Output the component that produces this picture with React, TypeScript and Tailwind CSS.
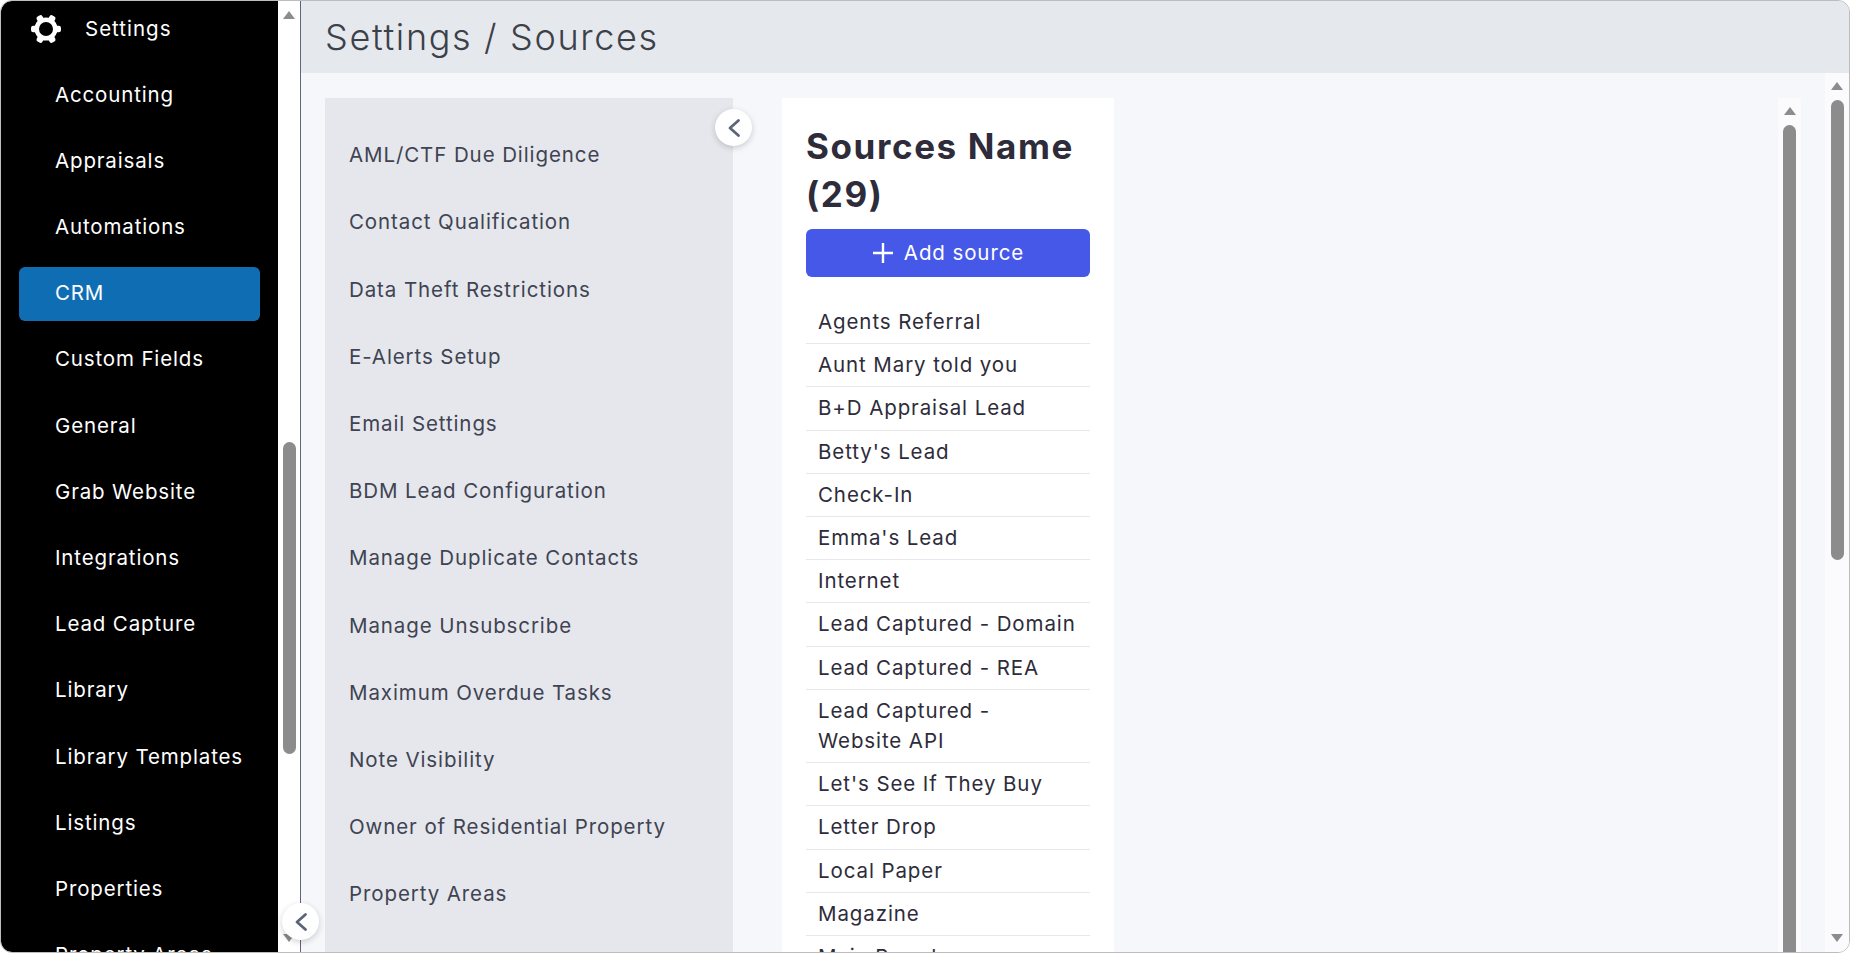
import React from "react";

const sidebarItems = [
  "Accounting",
  "Appraisals",
  "Automations",
  "CRM",
  "Custom Fields",
  "General",
  "Grab Website",
  "Integrations",
  "Lead Capture",
  "Library",
  "Library Templates",
  "Listings",
  "Properties",
  "Property Areas",
];

const panelItems = [
  "AML/CTF Due Diligence",
  "Contact Qualification",
  "Data Theft Restrictions",
  "E-Alerts Setup",
  "Email Settings",
  "BDM Lead Configuration",
  "Manage Duplicate Contacts",
  "Manage Unsubscribe",
  "Maximum Overdue Tasks",
  "Note Visibility",
  "Owner of Residential Property",
  "Property Areas",
];

const sources = [
  "Agents Referral",
  "Aunt Mary told you",
  "B+D Appraisal Lead",
  "Betty's Lead",
  "Check-In",
  "Emma's Lead",
  "Internet",
  "Lead Captured - Domain",
  "Lead Captured - REA",
  "Lead Captured - Website API",
  "Let's See If They Buy",
  "Letter Drop",
  "Local Paper",
  "Magazine",
  "Main Board",
];

const Gear = () => (
  <svg width="32" height="32" viewBox="0 0 32 32" className="shrink-0">
    {[30, 90, 150, 210, 270, 330].map((deg) => (
      <rect key={deg} x="12.75" y="1" width="6.5" height="7" rx="2.2" fill="#fff" transform={`rotate(${deg} 16 16)`} />
    ))}
    <circle cx="16" cy="16" r="9.25" fill="none" stroke="#fff" strokeWidth="4.5" />
  </svg>
);

const Collapse = ({ className }: { className: string }) => (
  <button className={`absolute z-10 flex h-[37px] w-[37px] items-center justify-center rounded-full bg-white shadow-[0_2px_6px_rgba(0,0,0,0.18)] ${className}`}>
    <svg width="14" height="20" viewBox="0 0 14 20" fill="none" stroke="#5b6478" strokeWidth="2.8" strokeLinecap="round" strokeLinejoin="round">
      <path d="M11.5 2.5 3 10l8.5 7.5" />
    </svg>
  </button>
);

const Up = () => <div className="h-0 w-0 border-x-[6px] border-b-[8px] border-x-transparent border-b-[#8c8c8c]" />;
const Down = () => <div className="h-0 w-0 border-x-[6px] border-t-[8px] border-x-transparent border-t-[#8c8c8c]" />;

export default function App() {
  return (
    <div className="h-[953px] w-[1850px] overflow-hidden bg-white" style={{ fontFamily: "Inter, sans-serif" }}>
      <div className="relative flex h-full w-full overflow-hidden rounded-[12px] border border-[#bdbdbd] bg-[#f6f7fb]">
        {/* left nav */}
        <aside className="h-full w-[277px] shrink-0 overflow-hidden rounded-l-[11px] bg-black text-white">
          <div className="flex h-[61px] items-center gap-[23px] pb-[5px] pl-[29px] text-[20.5px] font-[380] tracking-[1px]">
            <Gear />
            <span>Settings</span>
          </div>
          <ul className="flex flex-col px-[18px]">
            {sidebarItems.map((item) => (
              <li key={item} className="flex h-[66.2px] shrink-0 items-center pl-[36px] text-[20.5px] font-[380] tracking-[0.85px]">
                {item === "CRM" ? (
                  <span className="-ml-[36px] flex h-[54px] w-[241px] items-center rounded-[6px] bg-[#0f6eb3] pl-[36px]">CRM</span>
                ) : (
                  item
                )}
              </li>
            ))}
          </ul>
        </aside>
        <div className="flex w-[22px] shrink-0 flex-col items-center bg-white pt-[10px]">
          <Up />
          <div className="mt-[423px] h-[312px] w-[13px] rounded-[7px] bg-[#8c8c8c]" />
          <div className="mt-auto mb-[10px]">
            <Down />
          </div>
        </div>
        <Collapse className="left-[281px] top-[902px]" />

        {/* main */}
        <main className="flex h-full min-w-0 flex-1 flex-col border-l border-[#5f6675]">
          <header className="flex h-[72px] shrink-0 items-center rounded-tr-[11px] bg-[#e5e8ed] pl-[24px] text-[36px] font-light tracking-[1.65px] text-[#3c4048]">
            Settings / Sources
          </header>
          <div className="flex min-h-0 flex-1">
            <div className="relative flex min-h-0 flex-1 pl-[24px] pt-[25px]">
              <section className="h-[900px] w-[408px] shrink-0 bg-[#e5e7ec] pl-[24px] pt-[24px]">
                {panelItems.map((item) => (
                  <div key={item} className="flex h-[67.2px] items-center text-[20.5px] font-[380] tracking-[0.9px] text-[#3f4352]">
                    {item}
                  </div>
                ))}
              </section>
              <Collapse className="left-[414px] top-[36px]" />
              <section className="ml-[49px] h-[1200px] w-[332px] shrink-0 bg-white px-[24px] pt-[24px]">
                <h1 className="text-[35px] font-[750] leading-[48px] tracking-[1.6px] text-[#2e2c3a]">Sources Name (29)</h1>
                <button className="mt-[11px] flex h-[48px] w-full items-center justify-center gap-[10px] rounded-[6px] bg-[#4658e8] text-[20.5px] font-[380] tracking-[0.9px] text-white">
                  <svg width="22" height="22" viewBox="0 0 22 22" stroke="#fff" strokeWidth="2.4">
                    <path d="M11 1v20M1 11h20" />
                  </svg>
                  Add source
                </button>
                <ul className="mt-[24px]">
                  {sources.map((s) => (
                    <li key={s} className="border-b border-[#e6e8ee] py-[6px] pl-[12px] pr-[14px] text-[20.5px] font-[380] leading-[30.2px] tracking-[0.9px] text-[#2e2c3a]">
                      {s}
                    </li>
                  ))}
                </ul>
              </section>
              <div className="ml-auto mr-[24px] flex h-[900px] w-[23px] shrink-0 flex-col items-center bg-[#fbfbfd] pt-[9px]">
                <Up />
                <div className="mt-[10px] h-[860px] w-[13px] rounded-t-[7px] bg-[#8c8c8c]" />
              </div>
            </div>
            <div className="flex w-[24px] shrink-0 flex-col items-center bg-[#fbfbfd] pt-[9px]">
              <Up />
              <div className="mt-[10px] h-[460px] w-[13px] rounded-[7px] bg-[#8c8c8c]" />
              <div className="mt-auto mb-[10px]">
                <Down />
              </div>
            </div>
          </div>
        </main>
      </div>
    </div>
  );
}
